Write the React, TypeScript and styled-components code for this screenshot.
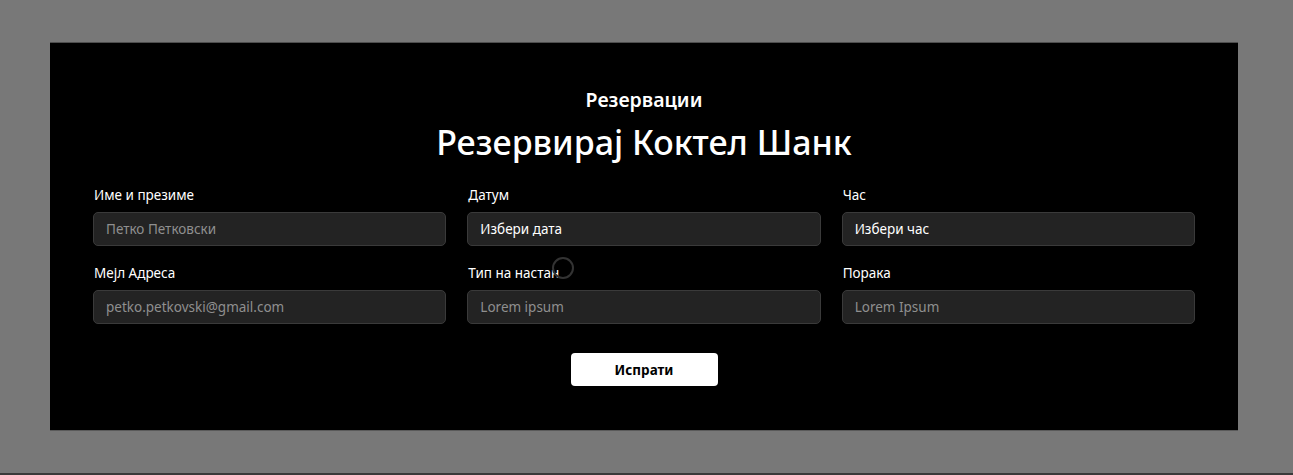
import React from "react";
import styled, { createGlobalStyle } from "styled-components";

const Global = createGlobalStyle`
  html, body { margin: 0; padding: 0; }
  body {
    background: #787878;
    font-family: "Noto Sans", "Open Sans", sans-serif;
    color: #fff;
  }
  * { box-sizing: border-box; }
`;

const Page = styled.div`
  width: 1293px;
  height: 475px;
  display: flex;
  flex-direction: column;
  padding-top: 42px;
  overflow: hidden;
`;

const Panel = styled.section`
  position: relative;
  margin-left: 50px;
  width: 1188px;
  height: 389px;
  background: #000;
  border-top: 1px solid #4e4e4e;
  border-bottom: 1px solid #5a5a5a;
  padding: 44px 43px 0;
  display: flex;
  flex-direction: column;
  align-items: center;
`;

const Kicker = styled.h3`
  margin: 0;
  font-size: 19.5px;
  line-height: 26px;
  font-weight: 600;
`;

const Title = styled.h1`
  margin: 7px 0 0;
  font-size: 34px;
  line-height: 44px;
  font-weight: 500;
`;

const Grid = styled.div`
  margin-top: 21px;
  width: 100%;
  display: grid;
  grid-template-columns: repeat(3, 1fr);
  column-gap: 21px;
  row-gap: 17px;
`;

const Field = styled.label`
  display: flex;
  flex-direction: column;
  gap: 7px;
`;

const LabelText = styled.span`
  font-size: 13.5px;
  line-height: 20px;
  color: #fff;
  padding-left: 1px;
`;

const Input = styled.input<{ $filled?: boolean }>`
  height: 34px;
  width: 100%;
  background: #232323;
  border: 1px solid #3a3a3a;
  border-radius: 5px;
  padding: 0 12px;
  font-family: "Noto Sans", "Open Sans", sans-serif;
  font-size: 13.5px;
  color: ${(p) => (p.$filled ? "#ffffff" : "#8f8f8f")};
  outline: none;
  &::placeholder {
    color: #8f8f8f;
    opacity: 1;
  }
`;

const Submit = styled.button`
  margin-top: 29px;
  width: 147px;
  height: 33px;
  background: #fff;
  color: #000;
  border: none;
  border-radius: 4px;
  font-family: "Noto Sans", "Open Sans", sans-serif;
  font-size: 13.5px;
  font-weight: 700;
  cursor: pointer;
`;

const Spinner = styled.div`
  position: absolute;
  left: 502px;
  top: 214px;
  width: 22px;
  height: 22px;
  border-radius: 50%;
  border: 2px solid #333;
  pointer-events: none;
`;

const FooterEdge = styled.div`
  margin-top: auto;
  height: 2px;
  background: #3a3a3a;
`;

type F = { label: string; placeholder?: string; value?: string };

const fields: F[] = [
  { label: "Име и презиме", placeholder: "Петко Петковски" },
  { label: "Датум", value: "Избери дата" },
  { label: "Час", value: "Избери час" },
  { label: "Мејл Адреса", placeholder: "petko.petkovski@gmail.com" },
  { label: "Тип на настан", placeholder: "Lorem ipsum" },
  { label: "Порака", placeholder: "Lorem Ipsum" },
];

export default function App() {
  return (
    <>
      <Global />
      <Page>
        <Panel>
          <Kicker>Резервации</Kicker>
          <Title>Резервирај Коктел Шанк</Title>
          <Grid>
            {fields.map((f) => (
              <Field key={f.label}>
                <LabelText>{f.label}</LabelText>
                {f.value ? (
                  <Input $filled defaultValue={f.value} readOnly />
                ) : (
                  <Input placeholder={f.placeholder} />
                )}
              </Field>
            ))}
          </Grid>
          <Submit type="button">Испрати</Submit>
          <Spinner />
        </Panel>
        <FooterEdge />
      </Page>
    </>
  );
}
